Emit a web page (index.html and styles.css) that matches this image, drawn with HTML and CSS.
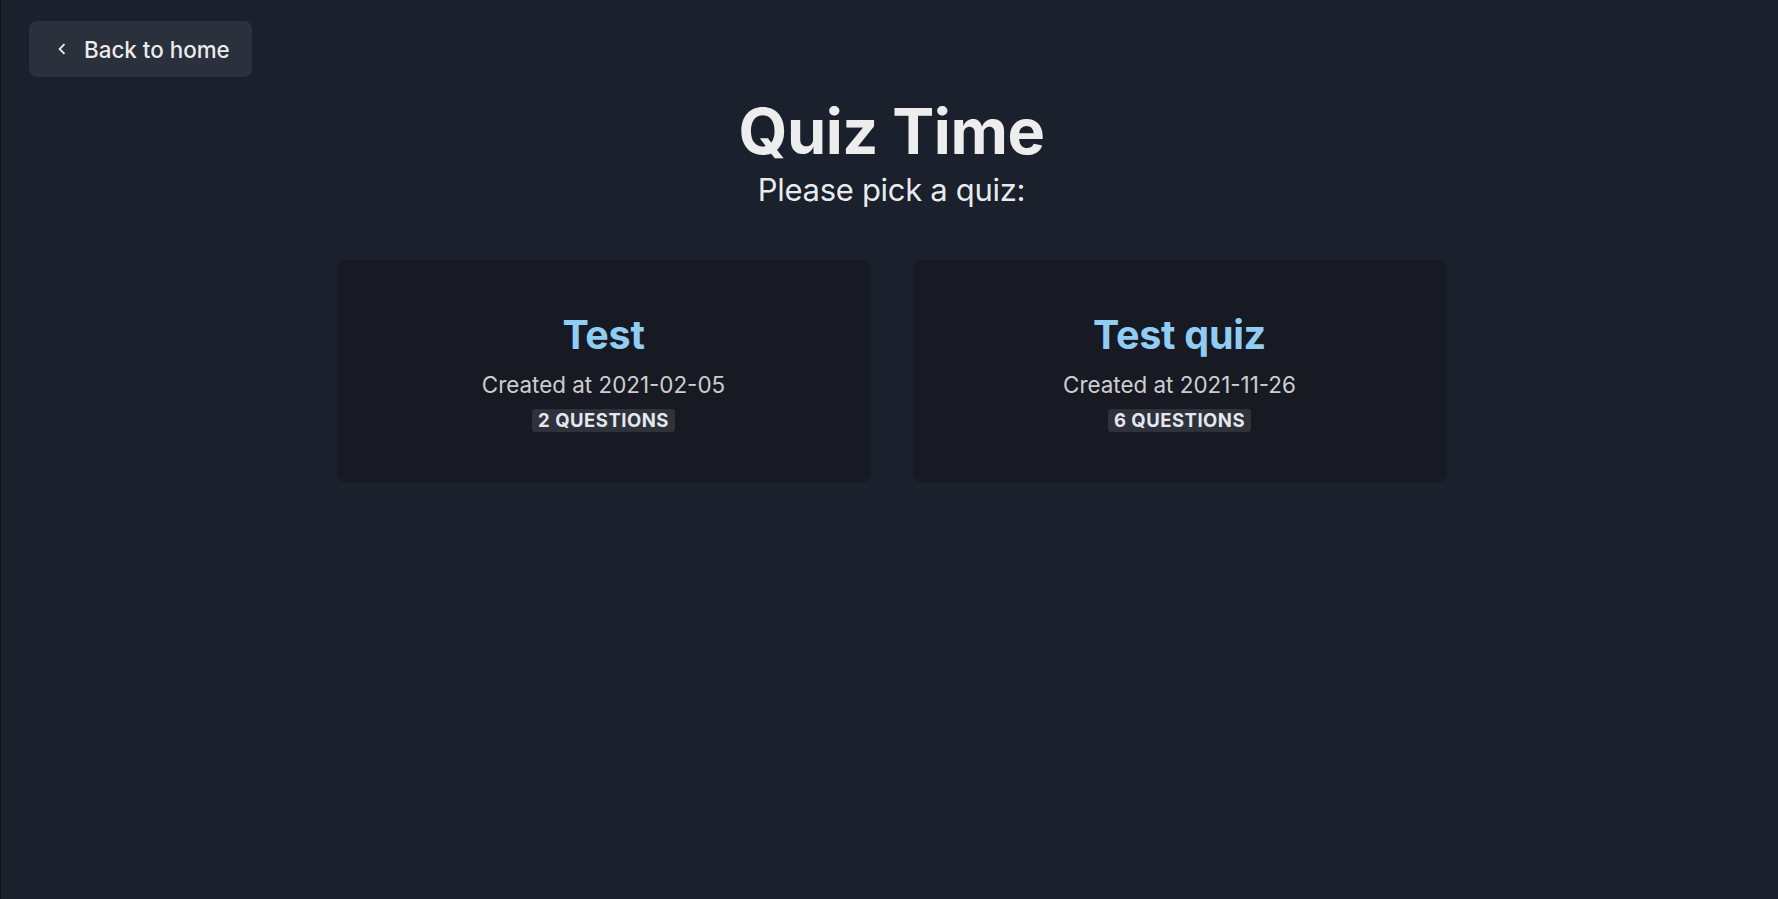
FILE: index.html
```html
<!DOCTYPE html>
<html lang="en">
<head>
<meta charset="utf-8">
<title>Quiz Time</title>
<link rel="stylesheet" href="styles.css">
</head>
<body>
<div class="page">
  <div class="topbar">
    <a class="back-btn" href="#">
      <svg class="chev" viewBox="0 0 24 24" width="22" height="22" aria-hidden="true"><path d="M15.41 7.41L14 6l-6 6 6 6 1.41-1.41L10.83 12z" fill="currentColor"/></svg>
      <span>Back to home</span>
    </a>
  </div>
  <main class="main">
    <h1 class="title">Quiz Time</h1>
    <p class="subtitle">Please pick a quiz:</p>
    <div class="grid">
      <div class="card">
        <h2 class="card-title">Test</h2>
        <p class="card-date">Created at 2021-02-05</p>
        <span class="badge">2 Questions</span>
      </div>
      <div class="card">
        <h2 class="card-title">Test quiz</h2>
        <p class="card-date">Created at 2021-11-26</p>
        <span class="badge">6 Questions</span>
      </div>
    </div>
  </main>
</div>
</body>
</html>
```

FILE: styles.css
```css
html, body {
  margin: 0;
  padding: 0;
  height: 100%;
  background: #1A202C;
}
body {
  font-family: Inter, "Noto Sans", sans-serif;
  color: rgba(255,255,255,0.92);
  border-left: 1px solid #0e1015;
  box-sizing: border-box;
}
.page {
  min-height: 100%;
}
.topbar {
  display: flex;
  padding: 21px 0 0 28px;
}
.back-btn {
  display: inline-flex;
  align-items: center;
  height: 56px;
  padding: 0 22px;
  border-radius: 8px;
  background: rgba(255,255,255,0.08);
  color: rgba(255,255,255,0.92);
  text-decoration: none;
  font-size: 22.4px;
  font-weight: 500;
  box-sizing: border-box;
}
.chev {
  width: 22px;
  height: 22px;
  margin-right: 11px;
}
.main {
  display: flex;
  flex-direction: column;
  align-items: center;
  padding-left: 4px;
}
.title {
  margin: 19.5px 0 0;
  font-size: 63px;
  font-weight: 700;
  line-height: 1.1;
  letter-spacing: -0.5px;
}
.subtitle {
  margin: 3.4px 0 0;
  font-size: 31px;
  line-height: 1.33;
  font-weight: 400;
  letter-spacing: -0.3px;
}
.grid {
  display: grid;
  grid-template-columns: 534px 534px;
  gap: 42px;
  margin-top: 49.6px;
}
.card {
  background: #171923;
  border-radius: 11px;
  padding: 51px 20px 50.5px;
  display: flex;
  flex-direction: column;
  align-items: center;
  text-align: center;
}
.card-title {
  margin: 0;
  font-size: 39.5px;
  font-weight: 700;
  line-height: 48px;
  letter-spacing: -0.3px;
  color: #90CDF4;
}
.card-date {
  margin: 9px 0 0;
  font-size: 22.4px;
  line-height: 1.5;
  color: rgba(255,255,255,0.8);
}
.badge {
  display: inline-block;
  padding: 0 6px;
  margin-top: 7.5px;
  font-size: 18.5px;
  line-height: 23px;
  font-weight: 700;
  text-transform: uppercase;
  letter-spacing: 0.5px;
  color: #E2E8F0;
  background: rgba(226,232,240,0.12);
  border-radius: 3px;
}
```
